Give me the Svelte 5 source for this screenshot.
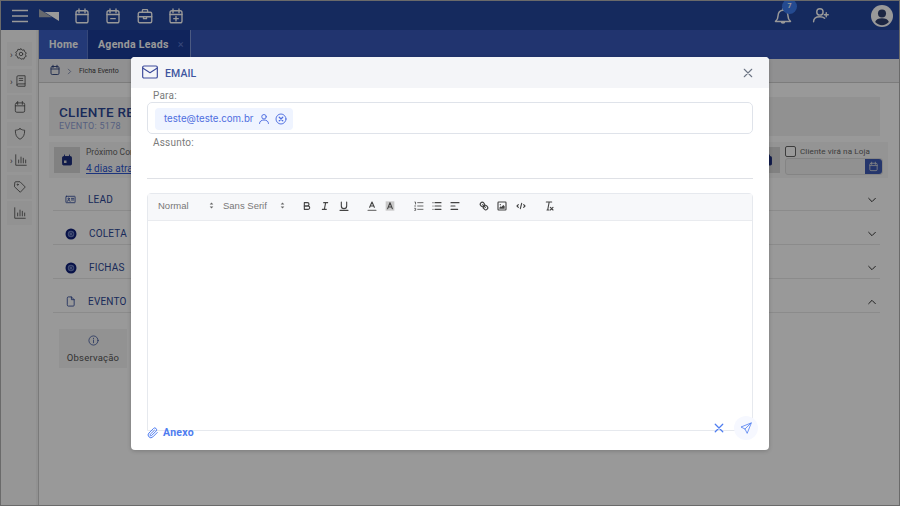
<script>
  let to = "teste@teste.com.br";
  let rows = [
    { label: "LEAD", icon: "card", open: false },
    { label: "COLETA", icon: "disc", open: false },
    { label: "FICHAS", icon: "disc", open: false },
    { label: "EVENTO", icon: "file", open: true }
  ];
</script>

{#snippet cal()}
  <rect x="4" y="5" width="16" height="16" rx="2.5" />
  <path d="M8 2.5v5M16 2.5v5M4 10h16" />
{/snippet}

<div class="page">
  <header class="topbar">
    <svg class="burger" viewBox="0 0 16 14"><path d="M0 1.5h16M0 7h16M0 12.5h16" /></svg>
    <svg class="logo" viewBox="0 0 20 12"><path class="logo-dim" d="M0 0v8.300h13z" /><path d="M5.500 3H20v9z" /></svg>
    <div class="top-icons">
      <svg viewBox="0 0 24 24">{@render cal()}</svg>
      <svg viewBox="0 0 24 24">{@render cal()}<path d="M9 15.5h6" /></svg>
      <svg viewBox="0 0 24 24"><rect x="3" y="7" width="18" height="14" rx="2" /><path d="M8.5 7V4.5a1 1 0 0 1 1-1h5a1 1 0 0 1 1 1V7M3 13h18M10 13v2.500h4V13" /></svg>
      <svg viewBox="0 0 24 24">{@render cal()}<path d="M12 12.500v6M9 15.500h6" /></svg>
    </div>
    <div class="top-right">
      <div class="bell">
        <svg viewBox="0 0 24 24"><path d="M3 18.500c2-1.500 3-3 3-6.500 0-4 2.500-7 6-7s6 3 6 7c0 3.500 1 5 3 6.500zM10 18.500a2 2 0 0 0 4 0M12 5V3" /></svg>
        <span class="badge">7</span>
      </div>
      <svg class="add-user" viewBox="0 0 24 24"><circle cx="10" cy="7.500" r="4" /><path d="M2 20c0-4.500 3.500-6.500 8-6.500 2.500 0 4.500.5 6 2M18 8.500v5M15.500 11h5" /></svg>
      <svg class="avatar" viewBox="0 0 24 24"><circle cx="12" cy="12" r="12" fill="#ffffff" /><circle cx="12" cy="9.200" r="4.400" fill="#30406e" /><path d="M4.500 18.500c1-3 4-4 7.500-4s6.500 1 7.500 4c-2 2.200-4.600 3.500-7.500 3.500s-5.500-1.300-7.500-3.500z" fill="#30406e" /></svg>
    </div>
  </header>

  <div class="below">
    <aside class="side">
      <div class="side-item more"><svg viewBox="0 0 24 24"><circle cx="12" cy="12" r="3" /><path d="M12 3l2 2.500 3.300-.6.900 3.200 2.800 1.900-1.500 3 1.500 3-3 1.500-.9 3.200-3.100-.6L12 21l-2.200-2.500-3.100.6-.9-3.200-3-1.500 1.500-3L2.800 9l3-1.900.9-3.200 3.300.6z" /></svg></div>
      <div class="side-item more"><svg viewBox="0 0 24 24"><path d="M5 19V5a2 2 0 0 1 2-2h12v14H7a2 2 0 0 0-2 2 2 2 0 0 0 2 2h12v-4M9 7.500h6M9 11h6" /></svg></div>
      <div class="side-item"><svg viewBox="0 0 24 24">{@render cal()}</svg></div>
      <div class="side-item"><svg viewBox="0 0 24 24"><path d="M12 3c3 1.800 5.500 2.500 8 2.500 0 8-2 12.500-8 15.500-6-3-8-7.500-8-15.500 2.500 0 5-.7 8-2.500z" /></svg></div>
      <div class="side-item more"><svg viewBox="0 0 24 24"><path d="M3 3v18h18M8 17v-5M12 17V7M16 17v-8M20 17v-5" /></svg></div>
      <div class="side-item"><svg viewBox="0 0 24 24"><path d="M3 4.500A1.500 1.500 0 0 1 4.500 3H12l9 9-8.500 9L3 12z" /><circle cx="8" cy="8" r="1" /></svg></div>
      <div class="side-item"><svg viewBox="0 0 24 24"><path d="M3 3v18h18M8 17v-5M12 17V7M16 17v-8M20 17v-5" /></svg></div>
    </aside>

    <main class="main">
      <nav class="tabs">
        <div class="tab">Home</div>
        <div class="tab active">Agenda Leads <span class="tab-x">×</span></div>
      </nav>
      <div class="crumbs">
        <svg viewBox="0 0 24 24">{@render cal()}</svg>
        <svg class="chev" viewBox="0 0 24 24"><path d="M8 4l8 8-8 8" /></svg>
        <span>Ficha Evento</span>
      </div>
      <div class="content">
        <div class="client">
          <h1>CLIENTE RESERVA</h1>
          <p>EVENTO: 5178</p>
        </div>
        <div class="next">
          <div class="next-left">
            <div class="next-icon"><svg viewBox="0 0 24 24"><path d="M3 7a2 2 0 0 1 2-2h14a2 2 0 0 1 2 2v13a2 2 0 0 1-2 2H5a2 2 0 0 1-2-2zM7 2v4M17 2v4" fill="#1c2d7c" stroke="#1c2d7c" /><rect x="6" y="13" width="5" height="5" fill="#d8d8d8" stroke="none" /></svg></div>
            <div>
              <div class="next-label">Próximo Contato</div>
              <a class="next-link" href="#top">4 dias atrasado</a>
            </div>
          </div>
          <div class="next-right">
            <div class="next-icon"><svg viewBox="0 0 24 24"><path d="M3 7a2 2 0 0 1 2-2h14a2 2 0 0 1 2 2v13a2 2 0 0 1-2 2H5a2 2 0 0 1-2-2zM7 2v4M17 2v4" fill="#1c2d7c" stroke="#1c2d7c" /></svg></div>
            <div class="store">
              <label class="check"><span class="box"></span>Cliente virá na Loja</label>
              <div class="date">
                <span class="date-btn"><svg viewBox="0 0 24 24">{@render cal()}</svg></span>
              </div>
            </div>
          </div>
        </div>
        <div class="acc">
          {#each rows as row}
            <div class="acc-row">
              {#if row.icon === "card"}
                <svg class="acc-icon" viewBox="0 0 24 24"><rect x="2" y="5" width="20" height="14" rx="1" /><circle cx="8" cy="10.500" r="1.600" /><path d="M5 16c.5-2 1.500-2.500 3-2.500s2.500.5 3 2.500M14 9.500h5M14 13h5" /></svg>
              {:else if row.icon === "disc"}
                <svg class="acc-icon disc" viewBox="0 0 24 24"><circle cx="12" cy="12" r="11" fill="#0e1f78" stroke="none" /><circle cx="12" cy="12" r="6.500" fill="#6d7fc0" stroke="none" /><circle cx="12" cy="12" r="3.500" fill="none" stroke="#0e1f78" stroke-width="1" /></svg>
              {:else}
                <svg class="acc-icon" viewBox="0 0 24 24"><path d="M5 4a2 2 0 0 1 2-2h7l6 6v12a2 2 0 0 1-2 2H7a2 2 0 0 1-2-2zM14 2v6h6" /></svg>
              {/if}
              <span>{row.label}</span>
              <svg class="acc-chev" viewBox="0 0 24 24"><path d={row.open ? "M4 16l8-8 8 8" : "M4 8l8 8 8-8"} /></svg>
            </div>
          {/each}
        </div>
        <div class="obs">
          <svg viewBox="0 0 24 24"><circle cx="12" cy="12" r="10" /><path d="M12 11v6M12 7v1" /></svg>
          <span>Observação</span>
        </div>
      </div>
    </main>
  </div>

  <div class="overlay">
    <div class="modal">
      <div class="modal-head">
        <svg class="mail" viewBox="0 0 24 20"><rect x="1" y="1" width="22" height="18" rx="2" /><path d="M1 4l11 7 11-7" /></svg>
        <span class="modal-title">EMAIL</span>
        <svg class="close" viewBox="0 0 12 12"><path d="M1.500 1.500l9 9M10.500 1.500l-9 9" /></svg>
      </div>
      <div class="modal-body">
        <div class="lbl first">Para:</div>
        <div class="to-box">
          <div class="chip">
            <span>{to}</span>
            <svg viewBox="0 0 24 24"><circle cx="12" cy="7.500" r="4.500" /><path d="M3 21c0-4.500 4-7 9-7s9 2.500 9 7" /></svg>
            <svg viewBox="0 0 24 24"><circle cx="12" cy="12" r="10" /><path d="M8.500 8.500l7 7M15.500 8.500l-7 7" stroke-width="2.600" /></svg>
          </div>
        </div>
        <div class="lbl">Assunto:</div>
        <div class="subject"></div>

        <div class="editor">
          <div class="toolbar">
            <div class="picker p1">Normal<svg viewBox="0 0 18 18"><polygon points="6 10.500 9 14 12 10.500" /><polygon points="6 7.500 9 4 12 7.500" /></svg></div>
            <div class="picker p2">Sans Serif<svg viewBox="0 0 18 18"><polygon points="6 10.500 9 14 12 10.500" /><polygon points="6 7.500 9 4 12 7.500" /></svg></div>

            <div class="group">
              <svg viewBox="0 0 18 18"><path d="M5,4H9.500A2.500,2.500,0,0,1,12,6.500v0A2.500,2.500,0,0,1,9.500,9H5V4Z" /><path d="M5,9h5.500A2.500,2.500,0,0,1,13,11.500v0A2.500,2.500,0,0,1,10.500,14H5V9Z" /></svg>
              <svg viewBox="0 0 18 18"><path d="M7 4h6M5 14h6M8 14l2-10" /></svg>
              <svg viewBox="0 0 18 18"><path d="M5,3V9a4,4,0,0,0,8,0V3" /><path d="M3 15.500h12" /></svg>
            </div>
            <div class="group">
              <svg viewBox="0 0 18 18"><path d="M3 15.500h12" stroke="#7a7a7a" /><path d="M5.500 11L9 3l3.500 8M6.400 9h5.200" /></svg>
              <svg viewBox="0 0 18 18"><rect class="shade" x="2.500" y="2" width="13" height="14" /><path d="M5.500 13L9 4l3.500 9M6.400 10.500h5.200" /></svg>
            </div>
            <div class="group">
              <svg viewBox="0 0 18 18"><path d="M7 4h8M7 9h8M7 14h8M2.800 3h1v3M2.500 9h1.500M2.500 12.500h1.500v3H2.500" stroke-width="1.200" /></svg>
              <svg viewBox="0 0 18 18"><path d="M6 4h9M6 9h9M6 14h9M3 4h.01M3 9h.01M3 14h.01" /></svg>
              <svg viewBox="0 0 18 18"><path d="M3 4h12M3 9h6M3 14h10" /></svg>
            </div>
            <div class="group">
              <svg viewBox="0 0 18 18"><path d="M7 7l4 4" /><path d="M8.900,4.577a3.476,3.476,0,0,1,.36,4.679A3.476,3.476,0,0,1,4.577,8.900C3.185,7.500,2.035,6.400,4.217,4.217S7.500,3.185,8.900,4.577Z" /><path d="M13.423,9.100a3.476,3.476,0,0,0-4.679-.36,3.476,3.476,0,0,0,.36,4.679c1.392,1.392,2.500,2.542,4.679.36S14.815,10.500,13.423,9.100Z" /></svg>
              <svg viewBox="0 0 18 18"><rect x="3" y="3" width="12" height="12" rx="1" /><circle cx="6.500" cy="7" r="1" class="fillc" /><path class="fillc" d="M5 13v-1.500l2-2 1 1 3-3 2 2V13z" /></svg>
              <svg viewBox="0 0 18 18"><path d="M5 7L3 9l2 2M13 7l2 2-2 2M10 5l-2 8" /></svg>
            </div>
            <div class="group">
              <svg viewBox="0 0 18 18"><path d="M5 3h8M6 15h3M9.300 3L7 15M11 11l4 4M15 11l-4 4" /></svg>
            </div>
          </div>
          <div class="editor-area"></div>
        </div>

        <div class="modal-foot">
          <svg class="clip" viewBox="0 0 24 24"><path d="M20.500 11l-8.800 8.800a5.500 5.500 0 0 1-7.800-7.800l9-9a3.600 3.600 0 0 1 5.200 5.200l-9 9a1.800 1.800 0 0 1-2.600-2.600L14.800 6.500" /></svg>
          <span class="anexo">Anexo</span>
          <svg class="cancel" viewBox="0 0 12 12"><path d="M1.500 1.500l9 9M10.500 1.500l-9 9" /></svg>
          <span class="send"><svg viewBox="0 0 24 24"><path d="M22 2L2 10l8 4 4 8zM10 14L22 2" /></svg></span>
        </div>
      </div>
    </div>
  </div>
</div>

<style>
  :global(body) {
    margin: 0;
    font-family: Roboto, "Liberation Sans", sans-serif;
  }

  svg {
    fill: none;
    stroke: currentColor;
    stroke-width: 1.8;
    stroke-linecap: round;
    stroke-linejoin: round;
    flex: none;
    display: block;
  }

  .page {
    position: relative;
    width: 898px;
    height: 504px;
    border: 1px solid #6a6a6a;
    overflow: hidden;
    background: #fff;
    display: flex;
    flex-direction: column;
  }

  .topbar {
    height: 29px;
    flex: none;
    background: #23469d;
    color: #fff;
    display: flex;
    align-items: center;
    padding-left: 11px;
  }

  .burger {
    width: 16px;
    height: 14px;
    stroke-width: 1.700;
  }

  .logo {
    width: 20px;
    height: 12px;
    margin-left: 11px;
    margin-top: -2px;
    fill: #fff;
    stroke: none;
  }

  .logo-dim {
    fill: #a9adb8;
  }

  .top-icons {
    display: flex;
    gap: 13.300px;
    margin-left: 14px;
  }

  .top-icons svg {
    width: 18px;
    height: 18px;
    stroke-width: 1.800;
  }

  .top-right {
    margin-left: auto;
    display: flex;
    align-items: center;
    padding-right: 6px;
  }

  .bell {
    position: relative;
    width: 20px;
    height: 20px;
  }

  .bell svg {
    width: 20px;
    height: 20px;
  }

  .badge {
    position: absolute;
    left: 9px;
    top: -7px;
    width: 15px;
    height: 15px;
    border-radius: 50%;
    background: #3d7cf0;
    font-size: 7px;
    font-weight: 700;
    line-height: 15px;
    text-align: center;
  }

  .add-user {
    width: 19px;
    height: 19px;
    margin-left: 19px;
  }

  .avatar {
    width: 22px;
    height: 22px;
    margin-left: 40px;
    stroke: none;
  }

  .below {
    flex: 1;
    display: flex;
    min-height: 0;
  }

  .side {
    width: 37px;
    flex: none;
    background: #fafafa;
    border-right: 1px solid #ccc;
    padding-top: 12px;
    display: flex;
    flex-direction: column;
    align-items: center;
    gap: 2.500px;
    box-shadow: inset -2px 0 0 #f2f2f2;
  }

  .side-item {
    position: relative;
    width: 25px;
    height: 24px;
    background: #f4f4f4;
    color: #555;
    display: flex;
    align-items: center;
    justify-content: center;
  }

  .side-item svg {
    width: 14px;
    height: 14px;
    stroke-width: 1.500;
  }

  .more {
    padding-left: 2px;
    box-sizing: border-box;
  }

  .more::before {
    content: "›";
    position: absolute;
    left: 3px;
    top: 9px;
    font-size: 9px;
    line-height: 9px;
  }

  .main {
    flex: 1;
    min-width: 0;
    display: flex;
    flex-direction: column;
  }

  .tabs {
    height: 29px;
    flex: none;
    background: #3758b9;
    display: flex;
    color: #fff;
    font-size: 10.500px;
    font-weight: 700;
    letter-spacing: 0.300px;
  }

  .tab {
    width: 49px;
    box-sizing: border-box;
    padding-left: 10px;
    line-height: 29px;
    background: #3b60c6;
    border-right: 1px solid #5b78cc;
  }

  .tab.active {
    width: 103px;
    background: #1b3c99;
    display: flex;
    gap: 9px;
    border-right: 1px solid #7f97d9;
  }

  .tab-x {
    color: #5b78cc;
    font-weight: 400;
    font-size: 11px;
  }

  .crumbs {
    height: 23px;
    flex: none;
    background: #f0f0f2;
    border-bottom: 1px solid #cfcfcf;
    padding-left: 10px;
    display: flex;
    align-items: center;
    color: #2a3f7a;
    font-size: 7px;
  }

  .crumbs svg {
    width: 12px;
    height: 12px;
    margin-top: -2px;
  }

  .crumbs .chev {
    width: 7px;
    height: 7px;
    margin: 1px 6px 0 5px;
  }

  .crumbs span {
    color: #444;
  }

  .content {
    flex: 1;
    padding: 14px 19px 0 10px;
    background: #fff;
  }

  .client {
    height: 39px;
    background: #f2f2f2;
    padding: 8px 0 0 10px;
    box-sizing: border-box;
    color: #2c4796;
  }

  .client h1 {
    margin: 0;
    font-size: 13.500px;
    line-height: 14px;
    font-weight: 500;
    letter-spacing: 0.300px;
  }

  .client p {
    margin: 2px 0 0;
    font-size: 9px;
    line-height: 10px;
    color: #8fa0d6;
    letter-spacing: 0.300px;
  }

  .next {
    margin: 6px -8px 0 0;
    height: 36px;
    background: #f7f7f7;
    display: flex;
    justify-content: space-between;
    padding-left: 5px;
  }

  .next-left {
    display: flex;
    gap: 6px;
    align-items: center;
  }

  .next-icon {
    width: 26px;
    height: 26px;
    background: #d8d8d8;
    display: flex;
    align-items: center;
    justify-content: center;
  }

  .next-icon svg {
    width: 12px;
    height: 12px;
  }

  .next-label {
    margin-top: 3px;
    font-size: 8.500px;
    color: #666;
  }

  .next-link {
    font-size: 10px;
    color: #2f57d0;
  }

  .next-right {
    display: flex;
    gap: 5px;
    align-items: center;
    padding-right: 5px;
  }

  .store {
    width: 98px;
  }

  .check {
    display: flex;
    align-items: center;
    gap: 4px;
    font-size: 8.100px;
    color: #666;
    letter-spacing: 0.100px;
  }

  .box {
    width: 9px;
    height: 9px;
    border: 1px solid #666;
    border-radius: 2px;
    background: #fff;
  }

  .date {
    margin-top: 1px;
    height: 17px;
    box-sizing: border-box;
    border: 1px solid #ddd;
    border-radius: 3px;
    display: flex;
    justify-content: flex-end;
    background: #f2f2f2;
  }

  .date-btn {
    width: 17px;
    background: #3e5bb5;
    color: #ddd;
    border-radius: 0 3px 3px 0;
    display: flex;
    align-items: center;
    justify-content: center;
  }

  .date-btn svg {
    width: 11px;
    height: 11px;
  }

  .acc {
    margin: -1px 0 0 4px;
  }

  .acc-row {
    height: 34px;
    box-sizing: border-box;
    border-bottom: 1px solid #e8e8e8;
    display: flex;
    align-items: center;
    padding: 12px 3px 0 12px;
    font-size: 10px;
    letter-spacing: 0.200px;
    color: #2c4796;
    gap: 12px;
  }

  .acc-icon {
    width: 11px;
    height: 11px;
    stroke-width: 1.800;
  }

  .acc-icon.disc {
    width: 12px;
    height: 12px;
  }

  .acc-chev {
    width: 10px;
    height: 10px;
    margin-left: auto;
    color: #333;
    stroke-width: 2.400;
  }

  .obs {
    width: 68px;
    height: 39px;
    margin: 16px 0 0 10px;
    background: #f4f4f4;
    display: flex;
    flex-direction: column;
    align-items: center;
    padding-top: 6px;
    box-sizing: border-box;
    gap: 6px;
    color: #2c4796;
    font-size: 9.500px;
  }

  .obs svg {
    width: 11px;
    height: 11px;
    stroke-width: 1.600;
  }

  .obs span {
    color: #555;
    letter-spacing: 0.200px;
  }

  .overlay {
    position: absolute;
    inset: 0;
    background: rgba(0, 0, 0, 0.4);
  }

  .modal {
    position: absolute;
    left: 130px;
    top: 56px;
    width: 638px;
    height: 393px;
    background: #fff;
    border-radius: 4px;
    overflow: hidden;
    box-shadow: 0 1px 4px rgba(0, 0, 0, 0.2);
  }

  .modal-head {
    height: 31px;
    background: #f4f5f8;
    display: flex;
    align-items: center;
    padding: 0 16px 0 11px;
  }

  .mail {
    width: 16px;
    height: 14px;
    color: #3f4d9c;
    stroke-width: 1.800;
    margin-top: -2px;
  }

  .modal-title {
    margin: 2px 0 0 7px;
    font-size: 10.500px;
    font-weight: 500;
    color: #3f55a0;
    letter-spacing: 0.100px;
  }

  .close {
    width: 10px;
    height: 10px;
    margin-left: auto;
    color: #6d7585;
    stroke-width: 1.300;
  }

  .modal-body {
    padding: 0 16px;
  }

  .lbl {
    font-size: 10px;
    line-height: 12px;
    color: #7a7a7a;
    padding-left: 6px;
    letter-spacing: 0.200px;
    margin-top: 3px;
  }

  .lbl.first {
    margin-top: 2px;
  }

  .to-box {
    height: 32px;
    border: 1px solid #dfe3ea;
    border-radius: 5px;
    box-sizing: border-box;
    padding: 4px 7px;
  }

  .chip {
    display: inline-flex;
    align-items: center;
    gap: 5px;
    height: 22px;
    padding: 0 6px 0 9px;
    background: #eff4ff;
    border-radius: 4px;
    color: #4f6fe0;
    font-family: Inter, Roboto, sans-serif;
    font-size: 9.700px;
  }

  .chip svg {
    width: 12px;
    height: 12px;
    stroke-width: 1.900;
  }

  .subject {
    height: 29px;
    border-bottom: 1px solid #dfe1e6;
    margin-bottom: 14px;
  }

  .editor {
    border: 1px solid #e6e9ee;
    border-radius: 4px 4px 0 0;
    height: 238px;
    box-sizing: border-box;
    display: flex;
    flex-direction: column;
  }

  .toolbar {
    height: 26px;
    box-sizing: content-box;
    flex: none;
    background: #f7f8fa;
    border-bottom: 1px solid #e9ebef;
    display: flex;
    align-items: flex-start;
    padding-left: 10px;
    color: #444;
    font-family: "Liberation Sans", sans-serif;
    font-size: 9.500px;
  }

  .picker {
    display: flex;
    align-items: center;
    justify-content: space-between;
    color: #777;
    margin-top: 6px;
  }

  .picker svg {
    width: 11px;
    height: 11px;
    stroke: none;
    fill: #666;
  }

  .p1 {
    width: 59px;
    margin-right: 6px;
  }

  .p2 {
    width: 64.500px;
    margin-right: 13.500px;
  }

  .group {
    display: flex;
    gap: 6.300px;
    margin: 6px 16.500px 0 0;
  }

  .group svg {
    width: 12px;
    height: 12px;
    stroke-width: 1.700;
  }

  .shade {
    fill: #c9c9c9;
    stroke: none;
  }

  .fillc {
    fill: currentColor;
    stroke: none;
  }

  .editor-area {
    flex: 1;
  }

  .modal-foot {
    position: relative;
    margin-top: -15px;
    height: 24px;
    display: flex;
    align-items: center;
    color: #4f7df0;
  }

  .clip {
    width: 12px;
    height: 12px;
    stroke-width: 2;
    align-self: flex-end;
    margin-bottom: 1px;
  }

  .anexo {
    margin-left: 4px;
    align-self: flex-end;
    margin-bottom: 1px;
    font-size: 10.500px;
    line-height: 12px;
    font-weight: 700;
    letter-spacing: 0.300px;
  }

  .cancel {
    width: 10px;
    height: 10px;
    margin-left: auto;
    margin-right: 10px;
    stroke-width: 1.500;
  }

  .send {
    width: 24px;
    height: 24px;
    margin-right: -5px;
    border-radius: 50%;
    background: #f6f8ff;
    display: flex;
    align-items: center;
    justify-content: center;
  }

  .send svg {
    width: 12px;
    height: 12px;
    stroke-width: 1.600;
  }
</style>
